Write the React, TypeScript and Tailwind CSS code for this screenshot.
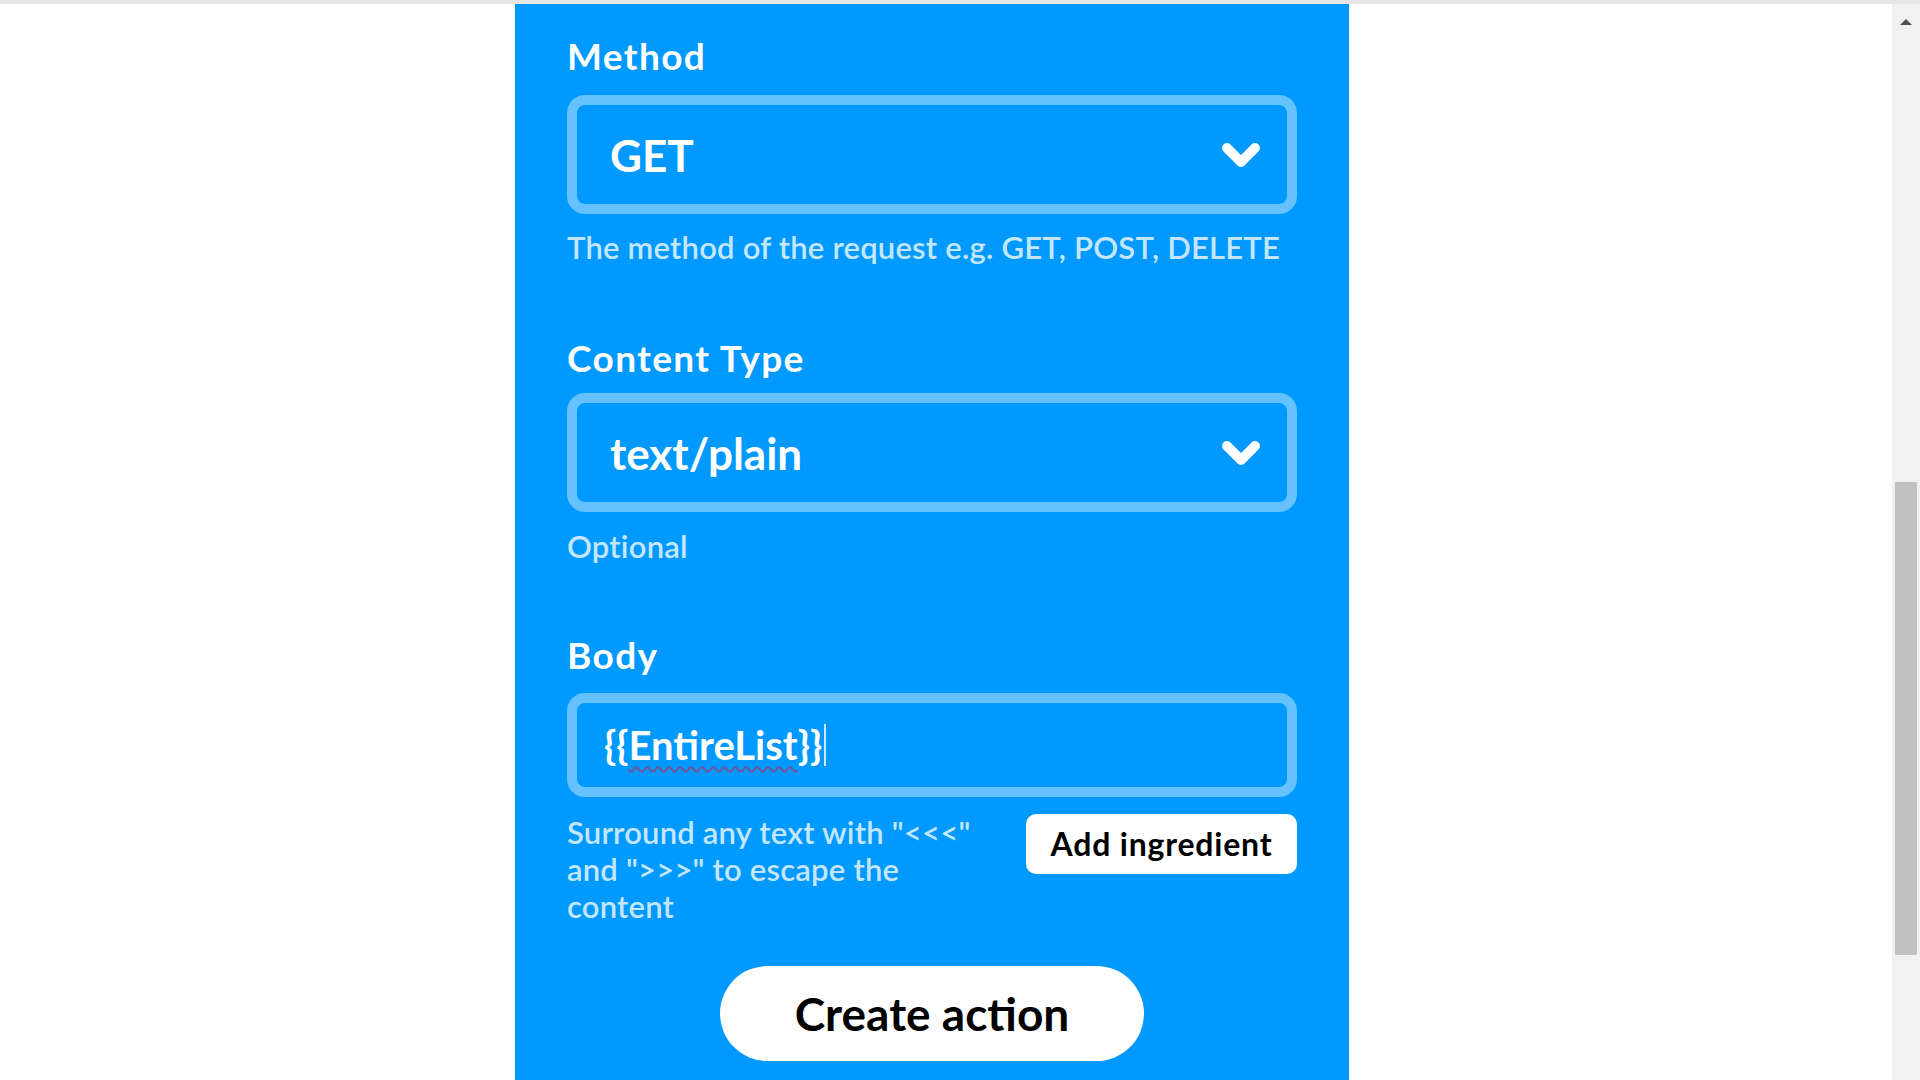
import { ChevronDown } from "lucide-react";

const FONT = "font-['Lato','Noto_Sans',sans-serif]";

function Label({ children, className = "" }: { children: string; className?: string }) {
  return (
    <div
      className={`flex h-[36px] items-center text-[37px] font-bold leading-none tracking-[1.4px] text-white ${className}`}
    >
      {children}
    </div>
  );
}

function Select({ value, className = "" }: { value: string; className?: string }) {
  return (
    <div
      className={`flex h-[119px] items-center justify-between rounded-[18px] border-[10px] border-[#66c2ff] pl-[33px] pr-[18px] ${className}`}
    >
      <span className="text-[44px] font-bold text-white">{value}</span>
      <ChevronDown className="h-[56px] w-[56px] text-white" strokeWidth={4.2} />
    </div>
  );
}

function Hint({ children, className = "" }: { children: React.ReactNode; className?: string }) {
  return (
    <div className={`text-[31px] font-semibold leading-[37px] tracking-[0.2px] text-[#c4e6ff] ${className}`}>
      {children}
    </div>
  );
}

export default function App() {
  return (
    <div className={`flex h-[1080px] w-[1920px] flex-col overflow-hidden bg-white ${FONT}`}>
      <div className="h-[4px] w-full shrink-0 bg-[#e6e6e6]" />
      <div className="flex flex-1">
        <div className="ml-[515px] w-[834px] bg-[#0099ff] px-[52px] pt-[33px]">
          <Label>Method</Label>
          <Select value="GET" className="mt-[22px]" />
          <Hint className="mt-[15px]">The method of the request e.g. GET, POST, DELETE</Hint>

          <Label className="mt-[73px]">Content Type</Label>
          <Select value="text/plain" className="mt-[18px]" />
          <Hint className="mt-[16px]">Optional</Hint>

          <Label className="mt-[71px]">Body</Label>
          <div className="mt-[21px] flex h-[104px] items-center rounded-[18px] border-[10px] border-[#66c2ff] pl-[27px]">
            <span className="text-[40px] font-bold text-white">
              {"{{"}
              <span className="underline decoration-[#7a4f8f] decoration-wavy decoration-2 underline-offset-[6px]">
                EntireList
              </span>
              {"}}"}
            </span>
            <span className="ml-[2px] h-[42px] w-[2px] bg-[#cfeaff]" />
          </div>

          <div className="mt-[17px] flex items-start justify-between">
            <Hint>
              Surround any text with "&lt;&lt;&lt;"
              <br />
              and "&gt;&gt;&gt;" to escape the
              <br />
              content
            </Hint>
            <button className="flex h-[60px] w-[271px] items-center justify-center rounded-[10px] bg-white text-[32px] font-bold tracking-[0.8px] text-black">
              Add ingredient
            </button>
          </div>

          <div className="mt-[41px] flex justify-center">
            <button className="flex h-[95px] w-[424px] items-center justify-center rounded-full bg-white text-[46px] font-bold text-black">
              Create action
            </button>
          </div>
        </div>

        <div className="ml-auto flex w-[28px] flex-col items-center bg-[#f1f1f1]">
          <div className="mt-[15px] h-0 w-0 border-x-[6px] border-b-[6px] border-x-transparent border-b-[#505050]" />
          <div className="mt-[457px] h-[473px] w-[22px] bg-[#c1c1c1]" />
        </div>
      </div>
    </div>
  );
}
